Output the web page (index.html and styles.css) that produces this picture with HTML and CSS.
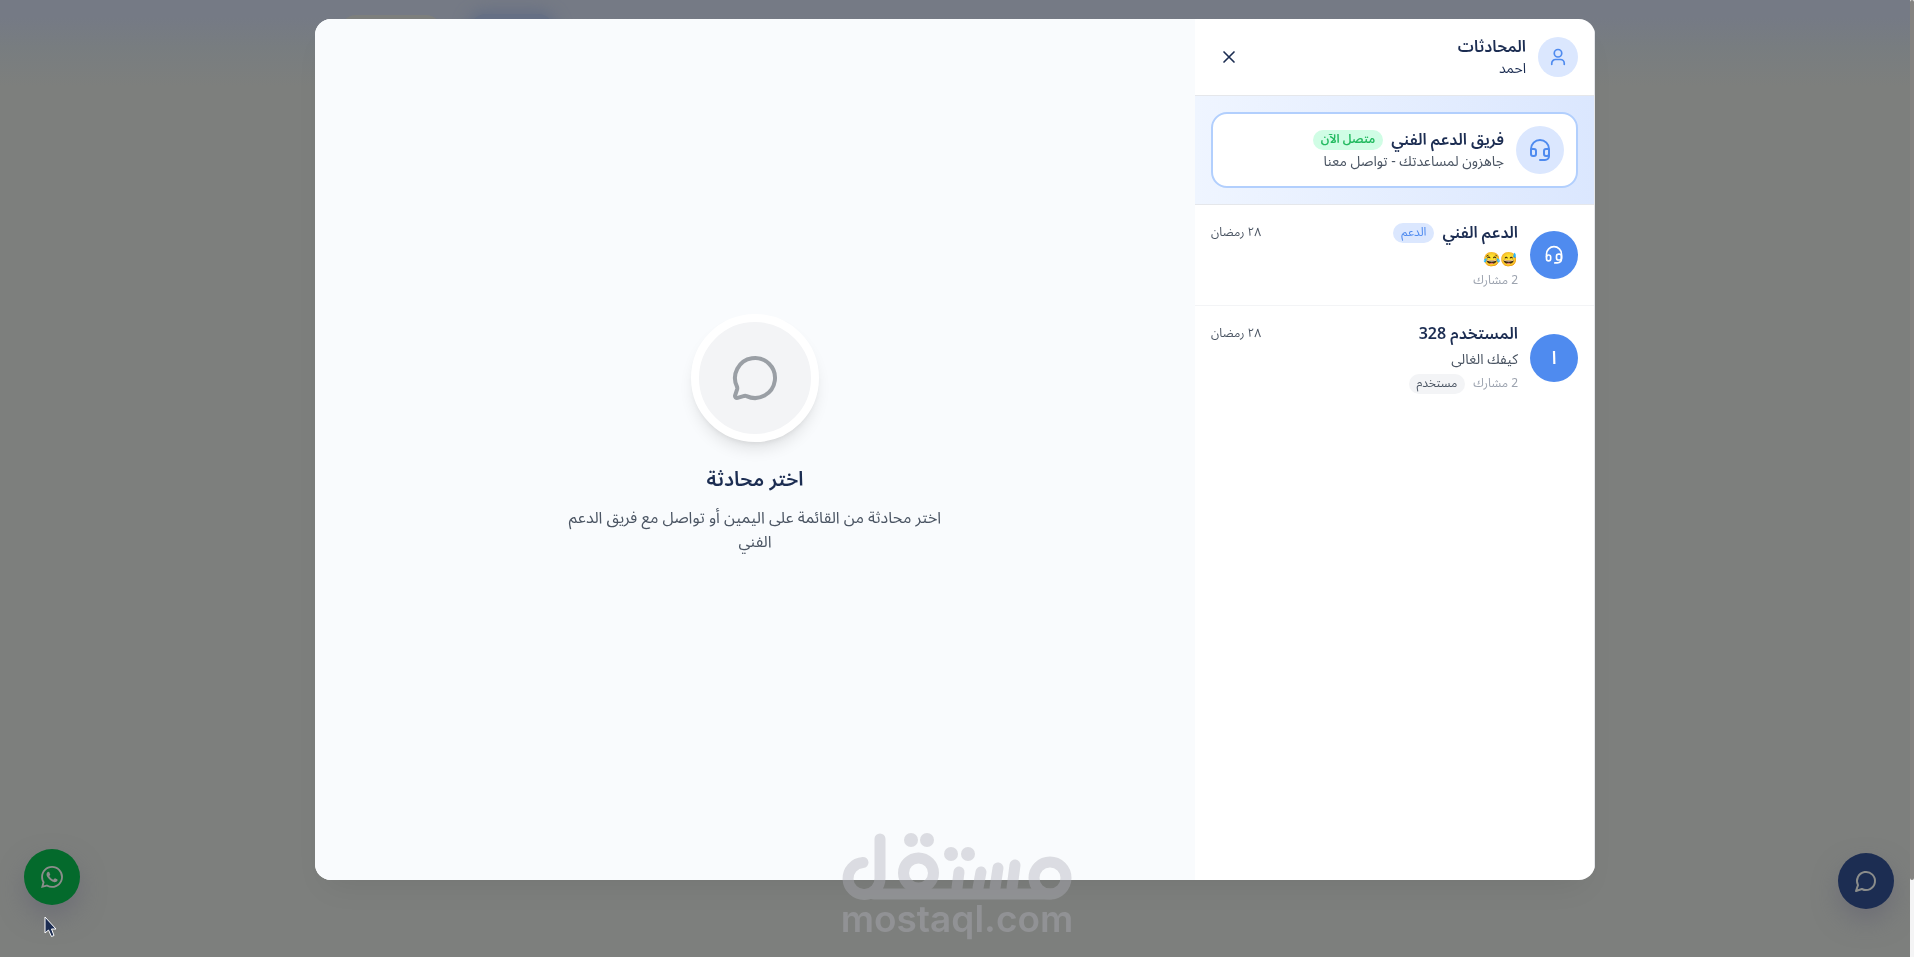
FILE: index.html
```html
<!DOCTYPE html>
<html lang="ar" dir="rtl">
<head>
    <meta charset="utf-8">
    <title>المحادثات</title>
    <link rel="stylesheet" href="styles.css">
</head>
<body>
<div class="page-header">
    <span class="nav-glow"></span>
    <span class="nav-pill"></span>
</div>

<a class="fab fab-whatsapp" href="#" aria-label="واتساب">
    <svg width="24" height="24" viewBox="0 0 24 24" fill="currentColor"><path d="M17.472 14.382c-.297-.149-1.758-.867-2.03-.967-.273-.099-.471-.148-.67.15-.197.297-.767.966-.94 1.164-.173.199-.347.223-.644.075-.297-.15-1.255-.463-2.39-1.475-.883-.788-1.48-1.761-1.653-2.059-.173-.297-.018-.458.13-.606.134-.133.298-.347.446-.52.149-.174.198-.298.298-.497.099-.198.05-.371-.025-.52-.075-.149-.669-1.612-.916-2.207-.242-.579-.487-.5-.669-.51-.173-.008-.371-.01-.57-.01-.198 0-.52.074-.792.372-.272.297-1.04 1.016-1.04 2.479 0 1.462 1.065 2.875 1.213 3.074.149.198 2.096 3.2 5.077 4.487.709.306 1.262.489 1.694.625.712.227 1.36.195 1.871.118.571-.085 1.758-.719 2.006-1.413.248-.694.248-1.289.173-1.413-.074-.124-.272-.198-.57-.347m-5.421 7.403h-.004a9.87 9.87 0 01-5.031-1.378l-.361-.214-3.741.982.998-3.648-.235-.374a9.86 9.86 0 01-1.51-5.26c.001-5.45 4.436-9.884 9.888-9.884 2.64 0 5.122 1.03 6.988 2.898a9.825 9.825 0 012.893 6.994c-.003 5.45-4.437 9.884-9.885 9.884m8.413-18.297A11.815 11.815 0 0012.05 0C5.495 0 .16 5.335.157 11.892c0 2.096.547 4.142 1.588 5.945L.057 24l6.305-1.654a11.882 11.882 0 005.683 1.448h.005c6.554 0 11.89-5.335 11.893-11.893a11.821 11.821 0 00-3.48-8.413z"/></svg>
</a>
<button class="fab fab-chat" type="button" aria-label="المحادثات">
    <svg class="icon" width="24" height="24" viewBox="0 0 24 24"><path d="M7.9 20A9 9 0 1 0 4 16.1L2 22Z"/></svg>
</button>

<div class="overlay">
    <div class="modal" role="dialog" aria-label="المحادثات">
        <aside class="sidebar">
            <header class="sidebar-header">
                <span class="avatar avatar-sm">
                    <svg class="icon" width="20" height="20" viewBox="0 0 24 24"><circle cx="12" cy="7.500" r="4.500"/><path d="M4.500 21v-1.500a4.500 4.500 0 0 1 4.500-4.500h6a4.500 4.500 0 0 1 4.500 4.500V21"/></svg>
                </span>
                <div class="grow">
                    <h2>المحادثات</h2>
                    <p class="user-name">احمد</p>
                </div>
                <button class="close" type="button" aria-label="إغلاق">
                    <svg class="icon" width="20" height="20" viewBox="0 0 24 24"><path d="M18 6 6 18M6 6l12 12"/></svg>
                </button>
            </header>

            <div class="support">
                <button class="support-card" type="button">
                    <span class="avatar">
                        <svg class="icon" width="24" height="24" viewBox="0 0 24 24"><path d="M3 11h3a2 2 0 0 1 2 2v3a2 2 0 0 1-2 2H5a2 2 0 0 1-2-2v-5Zm0 0a9 9 0 1 1 18 0m0 0v5a2 2 0 0 1-2 2h-1a2 2 0 0 1-2-2v-3a2 2 0 0 1 2-2h3Z"/><path d="M21 16v2a4 4 0 0 1-4 4h-5"/></svg>
                    </span>
                    <span class="grow">
                        <span class="line title-line"><b>فريق الدعم الفني</b><span class="badge online">متصل الآن</span></span>
                        <span class="line sub">جاهزون لمساعدتك - تواصل معنا</span>
                    </span>
                </button>
            </div>

            <ul class="chats">
                <li>
                    <span class="avatar avatar-solid">
                        <svg class="icon" width="20" height="20" viewBox="0 0 24 24"><path d="M3 14V11a9 9 0 0 1 18 0v5c0 3.500-2 5.500-5 5.500h-3"/><rect x="3" y="12" width="5" height="7" rx="2.500"/><rect x="15" y="11" width="6" height="7" rx="2.500"/></svg>
                    </span>
                    <div class="grow">
                        <div class="line title-line"><h3>الدعم الفني</h3><span class="badge">الدعم</span><time>٢٨ رمضان</time></div>
                        <p class="message emoji">😅😂</p>
                        <div class="meta"><span>2 مشارك</span></div>
                    </div>
                </li>
                <li>
                    <span class="avatar avatar-solid">ا</span>
                    <div class="grow">
                        <div class="line title-line"><h3>المستخدم 328</h3><time>٢٨ رمضان</time></div>
                        <p class="message">كيفك الغالى</p>
                        <div class="meta"><span>2 مشارك</span><span class="badge user">مستخدم</span></div>
                    </div>
                </li>
            </ul>
        </aside>

        <main class="empty">
            <div class="empty-icon">
                <svg class="icon" width="48" height="48" viewBox="0 0 24 24"><path d="M2.992 16.342a2 2 0 0 1 .094 1.167l-1.065 3.290a1 1 0 0 0 1.236 1.168l3.413-.998a2 2 0 0 1 1.099.092 10 10 0 1 0-4.777-4.719"/></svg>
            </div>
            <h2>اختر محادثة</h2>
            <p>اختر محادثة من القائمة على اليمين أو تواصل مع فريق الدعم الفني</p>
        </main>
    </div>
</div>

<div class="watermark" dir="ltr">
    <svg width="230" height="68" viewBox="0 0 230 68" fill="none" stroke="currentColor" stroke-width="11" stroke-linecap="round" aria-label="مستقل">
        <path d="M21 29.500A16 16 0 1 0 38 45V6M32 61H208"/>
        <circle cx="76.500" cy="40" r="15"/>
        <circle cx="208" cy="45" r="16"/>
        <path d="M117 39L115 55M139 39L136 55M156 35L153 55M173 32L170 55"/>
        <g fill="currentColor" stroke="none"><circle cx="69" cy="7" r="7"/><circle cx="85" cy="7" r="7"/><circle cx="109" cy="21" r="7"/><circle cx="126" cy="21" r="7"/></g>
    </svg>
    <span>mostaql.com</span>
</div>

<div class="scrollbar"><span></span></div>
<svg class="cursor" width="14" height="22" viewBox="0 0 14 22"><path d="M1 1V17L4.500 14L7.500 20.500L10 19.500L7.500 13H12Z" fill="#1c2d52" stroke="#fff"/></svg>
</body>
</html>
```
FILE: styles.css
```css
* { box-sizing: border-box; }
body {
    margin: 0;
    min-height: 100vh;
    background: #7d7f7d;
    color: #1c2d52;
    font-family: "Noto Sans Arabic", "Noto Sans", "DejaVu Sans", sans-serif;
    font-size: 14px;
    line-height: 20px;
}
h2, h3, p, ul { margin: 0; padding: 0; }
h2, h3 { font-size: 16px; line-height: 24px; }
h2, h3, b { font-weight: 600; }
button { font: inherit; color: inherit; border: 0; cursor: pointer; }
.icon {
    fill: none;
    stroke: currentColor;
    stroke-width: 2;
    stroke-linecap: round;
    stroke-linejoin: round;
}
.grow { flex: 1; min-width: 0; }

/* dimmed page behind the dialog */
.page-header {
    position: relative;
    height: 86px;
    overflow: hidden;
    background: linear-gradient(#757a85 20%, #787d80 55%, #7d7f7d);
}
.nav-pill, .nav-glow { position: absolute; }
.nav-pill { left: 340px; top: 15px; width: 102px; height: 40px; border-radius: 16px; background: #7d7f7d; }
.nav-glow { left: 470px; top: 14px; width: 84px; height: 40px; border-radius: 16px; background: #656f84; box-shadow: 0 0 14px 4px #656f84; }

.fab {
    position: fixed;
    display: flex;
    align-items: center;
    justify-content: center;
    width: 56px;
    height: 56px;
    border-radius: 50%;
    color: #8b8d8b;
    box-shadow: 0 12px 24px rgba(95, 95, 112, .5);
}
.fab-whatsapp { left: 24px; bottom: 52px; background: #046a2c; }
.fab-whatsapp svg { width: 22px; height: 22px; }
.fab-chat { right: 20px; bottom: 48px; background: #1c2d52; }

.overlay {
    position: fixed;
    inset: 0 4px 0 0;
    display: flex;
    justify-content: center;
    align-items: flex-start;
    padding: 2vh 16px;
}
.modal {
    display: flex;
    width: 100%;
    max-width: 1280px;
    height: 90vh;
    overflow: hidden;
    border-radius: 16px;
    background: #fff;
    box-shadow: 0 16px 32px -12px rgba(0, 0, 0, .08);
}

.sidebar { width: 400px; flex: none; border-right: 1px solid #e5e7eb; }
.sidebar-header {
    display: flex;
    align-items: center;
    gap: 12px;
    padding: 16px;
    height: 77px;
    border-bottom: 1px solid #e5e7eb;
}
.close { display: flex; padding: 8px; background: none; }
.avatar {
    display: flex;
    flex: none;
    align-items: center;
    justify-content: center;
    width: 48px;
    height: 48px;
    border-radius: 50%;
    background: #dbe7fe;
    color: #4f8bef;
}
.avatar-sm { width: 40px; height: 40px; }
.avatar-solid { background: #4f8bef; color: #fff; font-size: 18px; font-weight: 600; }

.support {
    padding: 16px;
    border-bottom: 1px solid #e5e7eb;
    background: linear-gradient(to left, #dbe7fe, #eff5ff);
}
.support-card {
    display: flex;
    align-items: center;
    gap: 12px;
    width: 100%;
    padding: 12px;
    border: 2px solid #b2cffd;
    border-radius: 16px;
    background: #fff;
    text-align: right;
}
.line { display: flex; align-items: center; white-space: nowrap; }
.title-line { gap: 8px; height: 24px; font-size: 16px; }
.sub, .message { color: #4b5563; }
.badge {
    padding: 2px 8px;
    border-radius: 10px;
    background: #dbe7fe;
    color: #4f8bef;
    font-size: 12px;
    line-height: 16px;
}
.online { background: #d0fde5; color: #23ba60; font-weight: 600; }
.user { background: #f3f4f6; color: #4b5563; }

.chats { list-style: none; }
.chats li { display: flex; align-items: center; gap: 12px; padding: 16px; }
.chats li + li { border-top: 1px solid #f3f4f6; }
time { margin-right: auto; color: #4b5563; font-size: 12px; }
.message { margin: 4px 0; }
.emoji { font-family: "Noto Color Emoji", sans-serif; }
.meta { display: flex; align-items: center; gap: 8px; color: #9ca3af; font-size: 12px; line-height: 16px; }

.empty {
    flex: 1;
    display: flex;
    flex-direction: column;
    align-items: center;
    justify-content: center;
    padding-bottom: 32px;
    background: #f9fbfd;
    text-align: center;
}
.empty-icon {
    display: flex;
    align-items: center;
    justify-content: center;
    width: 128px;
    height: 128px;
    margin-bottom: 24px;
    border: 8px solid #fff;
    border-radius: 50%;
    background: #f3f4f6;
    color: #9a9fa5;
    box-shadow: 0 10px 15px -3px rgba(0, 0, 0, .1), 0 4px 6px -4px rgba(0, 0, 0, .1);
}
.empty h2 { margin-bottom: 12px; font-size: 20px; line-height: 28px; }
.empty p { width: 384px; color: #4b5563; font-size: 16px; line-height: 24px; }

.watermark {
    position: fixed;
    left: 0;
    right: 0;
    bottom: 20px;
    display: flex;
    flex-direction: column;
    align-items: center;
    color: #b0b0b8;
    opacity: .4;
    pointer-events: none;
}
.watermark span { font: 600 37px/36px Inter, "Liberation Sans", sans-serif; }

.scrollbar { position: fixed; top: 0; right: 0; bottom: 0; width: 4px; background: #f4f4f5; }
.scrollbar span { display: block; height: 92vh; border-radius: 4px; background: #858381; }
.cursor { position: fixed; left: 44px; top: 916px; }
```
